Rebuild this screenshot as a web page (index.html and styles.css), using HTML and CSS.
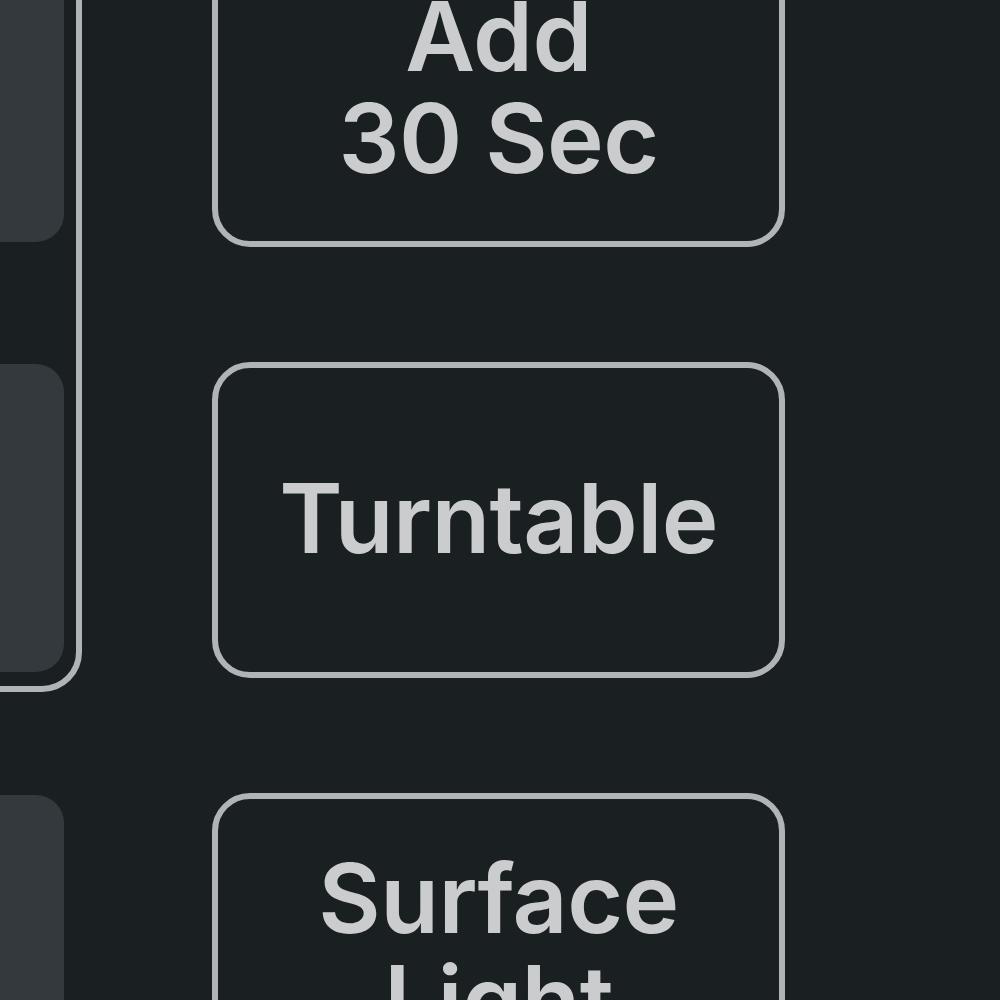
FILE: index.html
```html
<!DOCTYPE html>
<html lang="en">
<head>
    <meta charset="UTF-8">
    <meta name="viewport" content="width=device-width, initial-scale=1.0">
    <title>Controls</title>
    <link rel="stylesheet" href="styles.css">
</head>
<body>
    <div class="screen">
        <div class="side">
            <div class="side-panel">
                <div class="slot"></div>
                <div class="slot"></div>
            </div>
            <div class="slot slot-loose"></div>
        </div>

        <div class="buttons">
            <button class="btn">Add<br>30 Sec</button>
            <button class="btn">Turntable</button>
            <button class="btn">Surface<br>Light</button>
        </div>
    </div>
</body>
</html>
```

FILE: styles.css
```css
html, body {
    margin: 0;
    height: 100%;
    overflow: hidden;
}

body {
    background-color: #1a1f21;
    font-family: Inter, "Liberation Sans", Arial, sans-serif;
}

.screen {
    display: flex;
    margin-top: -86px;
    margin-left: -60px;
}

/* left column with the framed pair of slots */
.side {
    display: flex;
    flex-direction: column;
    width: 142px;
}

.side-panel {
    border: 6px solid #b1b4b6;
    border-radius: 0 40px 40px 0;
    padding: 14px 12px;
    display: flex;
    flex-direction: column;
    gap: 122px;
}

.slot {
    height: 308px;
    background-color: #33393c;
    border-radius: 0 28px 28px 0;
}

.slot-loose {
    margin: 103px 18px 0 18px;
}

.buttons {
    margin-left: 130px;
    padding-top: 17px;
    display: flex;
    flex-direction: column;
    gap: 115px;
}

.btn {
    width: 573px;
    height: 316px;
    box-sizing: border-box;
    border: 6px solid #b1b4b6;
    border-radius: 38px;
    background: transparent;
    color: #cbcccd;
    font-family: inherit;
    font-size: 96px;
    font-weight: 600;
    letter-spacing: -0.6px;
    line-height: 102px;
    text-align: center;
    padding: 0 0 5px;
}
```
